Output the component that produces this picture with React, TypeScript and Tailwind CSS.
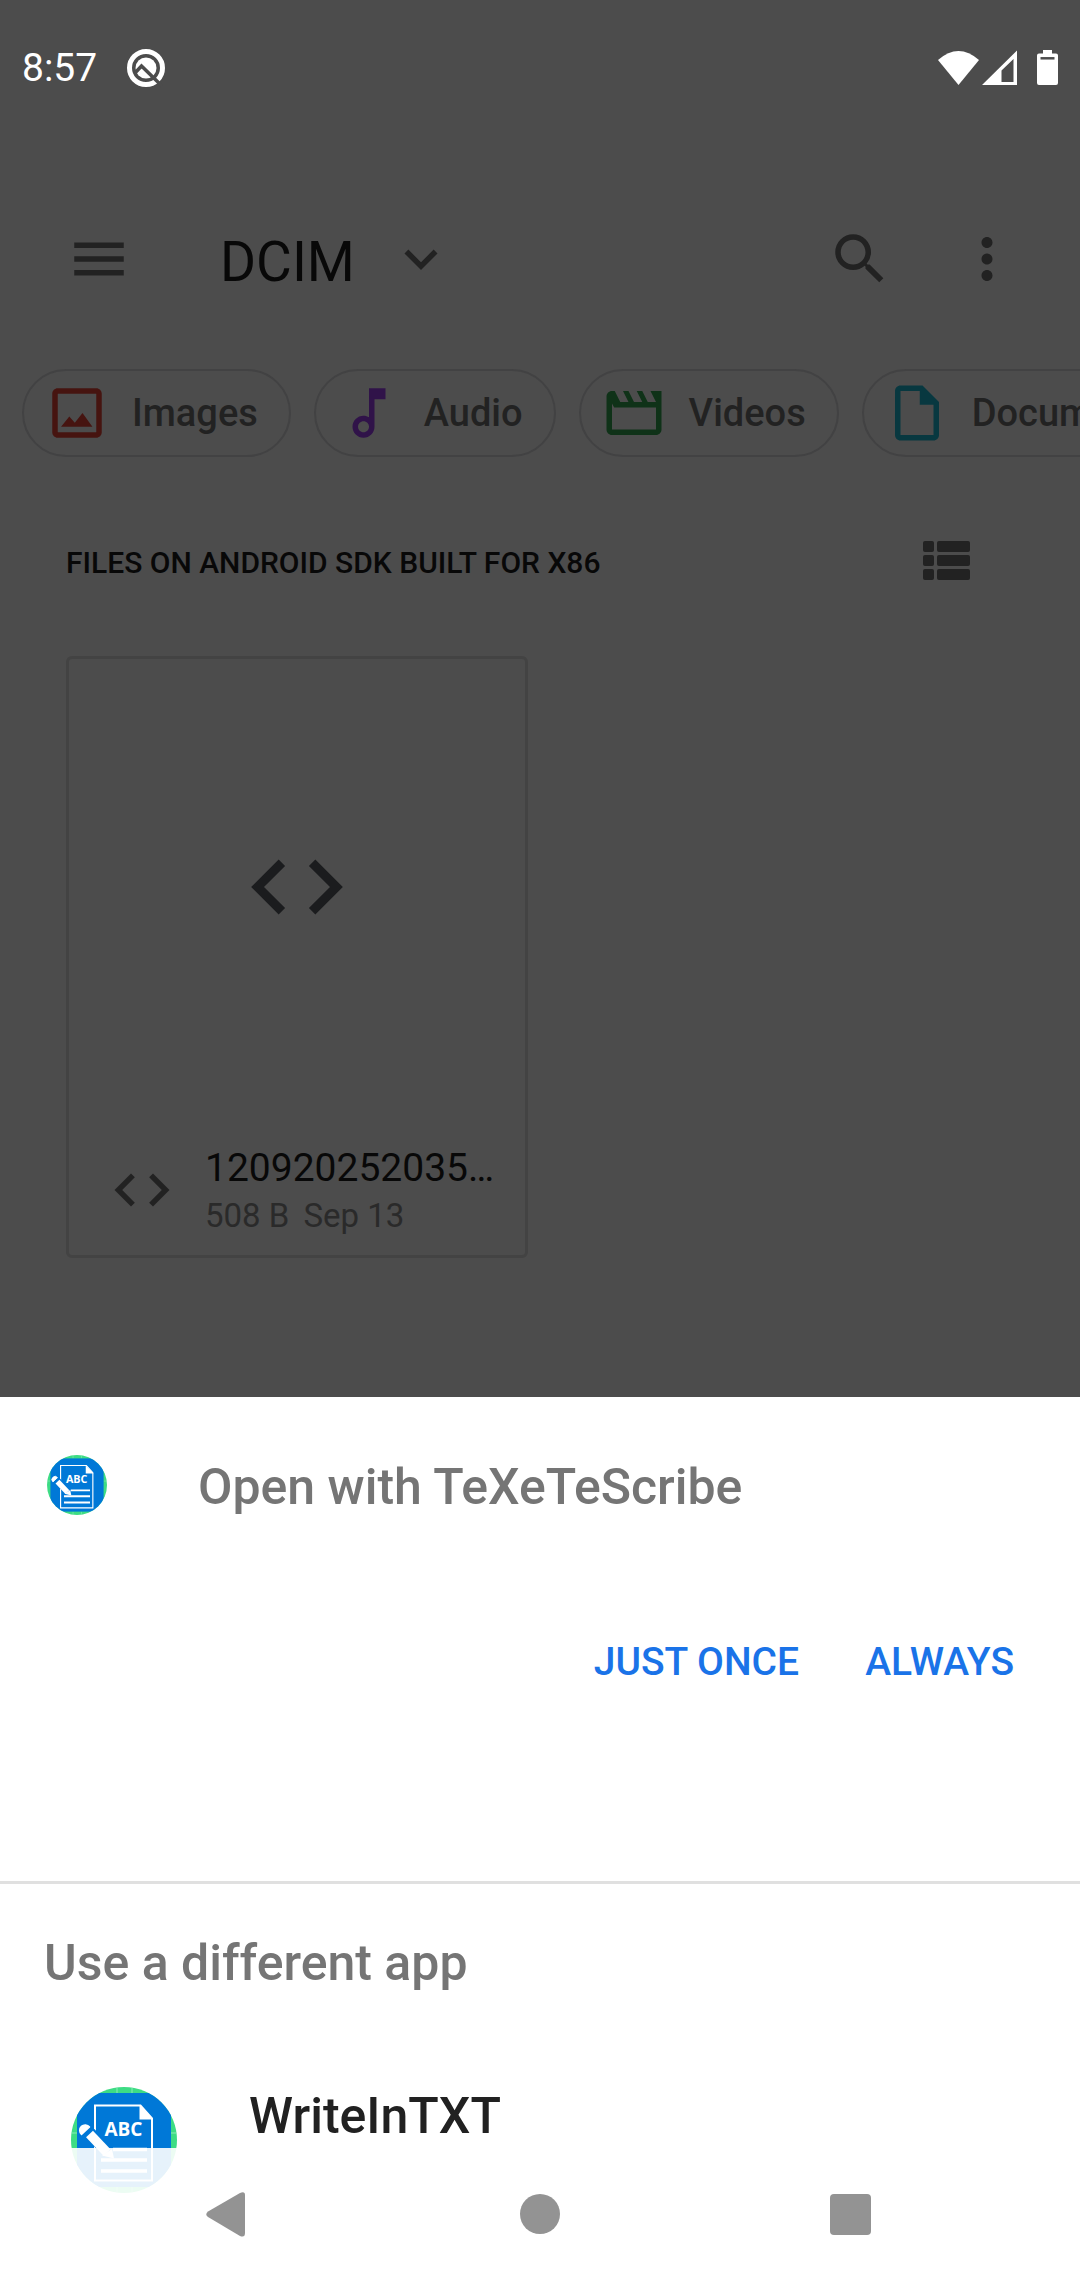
import type { ReactNode } from "react";

function MaterialIcon({ d, className }: { d: string; className: string }) {
  return (
    <svg viewBox="0 0 24 24" fill="currentColor" className={className} aria-hidden="true">
      <path d={d} />
    </svg>
  );
}

const paths = {
  menu: "M3 18h18v-2H3v2zm0-5h18v-2H3v2zm0-7v2h18V6H3z",
  expand: "M16.59 8.59 12 13.17 7.41 8.59 6 10l6 6 6-6z",
  search:
    "M15.5 14h-.79l-.28-.27A6.471 6.471 0 0 0 16 9.5 6.5 6.5 0 1 0 9.5 16c1.61 0 3.09-.59 4.23-1.57l.27.28v.79l5 4.99L20.49 19l-4.99-5zm-6 0C7.01 14 5 11.99 5 9.5S7.01 5 9.5 5 14 7.01 14 9.5 11.99 14 9.5 14z",
  more: "M12 8c1.1 0 2-.9 2-2s-.9-2-2-2-2 .9-2 2 .9 2 2 2zm0 2c-1.1 0-2 .9-2 2s.9 2 2 2 2-.9 2-2-.9-2-2-2zm0 6c-1.1 0-2 .9-2 2s.9 2 2 2 2-.9 2-2-.9-2-2-2z",
  code: "M9.4 16.6 4.8 12l4.6-4.6L8 6l-6 6 6 6 1.4-1.4zm5.2 0 4.6-4.6-4.6-4.6L16 6l6 6-6 6-1.4-1.4z",
  image:
    "M19 3H5c-1.1 0-2 .9-2 2v14c0 1.1.9 2 2 2h14c1.1 0 2-.9 2-2V5c0-1.1-.9-2-2-2zm0 16H5V5h14v14zM6.2 17h11.4l-3.6-5-2.8 3.5-2-2.2z",
  audio:
    "M12 3l.01 10.55c-.59-.34-1.27-.55-2-.55C7.79 13 6 14.79 6 17s1.79 4 4.01 4S14 19.21 14 17V7h4V3h-6zm-1.99 16c-1.1 0-2-.9-2-2s.9-2 2-2 2 .9 2 2-.9 2-2 2z",
  video:
    "M18 4l2 4h-3l-2-4h-2l2 4h-3l-2-4H8l2 4H7L5 4H4c-1.1 0-1.99.9-1.99 2L2 18c0 1.1.9 2 2 2h16c1.1 0 2-.9 2-2V4h-4zm2 14H4V8.5L4.8 10H20v8z",
  document:
    "M14 2H6c-1.1 0-1.99.9-1.99 2L4 20c0 1.1.89 2 1.99 2H18c1.1 0 2-.9 2-2V8l-6-6zM6 20V4h7v5h5v11H6z",
};

function StatusBar() {
  return (
    <div className="flex h-[132px] items-center justify-between pt-1 pr-[20px] pl-[22px] text-white">
      <div className="flex items-center gap-[29px]">
        <span className="text-[39px] leading-[46px]">8:57</span>
        <svg viewBox="0 0 40 40" className="h-[40px] w-[40px]" aria-hidden="true">
          <circle cx="20" cy="20" r="16.5" fill="none" stroke="#fff" strokeWidth="5" />
          <circle cx="20" cy="20" r="10.5" fill="#fff" />
          <path d="M8.500 25.500 L15.500 18 L36 38" fill="none" stroke="#4c4c4c" strokeWidth="3.500" />
        </svg>
      </div>
      <svg viewBox="0 0 122 36" className="h-[36px] w-[122px]" role="img" aria-label="Wi-Fi, signal and battery">
        <path d="M0 10 Q20.500 -8 41 10 L20.500 35 Z" fill="#fff" />
        <path d="M44 35 L79 0.500 V35 Z M63.500 20.500 V32 H75.500 V9 Z" fill="#fff" fillRule="evenodd" />
        <path
          d="M105 0 h9 v3.500 h4 a2 2 0 0 1 2 2 v27.500 a2 2 0 0 1 -2 2 h-17 a2 2 0 0 1 -2 -2 v-27.500 a2 2 0 0 1 2 -2 h4 Z"
          fill="#fff"
        />
        <path d="M102.500 8.300 h14" stroke="#4c4c4c" strokeWidth="2.500" />
      </svg>
    </div>
  );
}

function Chip({ label, icon, color }: { label: string; icon: string; color: string }) {
  return (
    <button
      type="button"
      className="flex h-[88px] shrink-0 items-center gap-[22px] rounded-full border-2 border-[#424243] pr-[31px] pl-[20px] text-[38px] leading-[46px] font-medium text-[#222222]"
    >
      <span className={color}>
        <MaterialIcon d={icon} className="h-[66px] w-[66px]" />
      </span>
      {label}
    </button>
  );
}

function IconButton({ label, children }: { label: string; children: ReactNode }) {
  return (
    <button type="button" aria-label={label} className="shrink-0 text-[#222222]">
      {children}
    </button>
  );
}

function AppLogo({ className }: { className: string }) {
  return (
    <svg viewBox="0 0 106 106" className={className} aria-hidden="true">
      <clipPath id="disc">
        <circle cx="53" cy="53" r="53" />
      </clipPath>
      <g clipPath="url(#disc)">
        <rect width="106" height="106" fill="#3ddc84" />
        <path d="M46 0V6M61 0V6M0 46H6M100 46H106M46 100V106M61 100V106" stroke="#8aeab6" />
        <rect x="6" y="6" width="94" height="94" fill="#0078d7" />
      </g>
      <path d="M24 18.500H69.500L81 31.500V93.500H24Z" fill="none" stroke="#fff" strokeWidth="2" />
      <path d="M68.500 18V32.500H82Z" fill="#fff" />
      <text
        x="52.500"
        y="49"
        textAnchor="middle"
        fontSize="19"
        fontWeight="700"
        fill="#fff"
        fontFamily="Open Sans, Noto Sans, sans-serif"
      >
        ABC
      </text>
      <path d="M42 62.500H76M30 73H76M30 84H76" stroke="#fff" strokeWidth="3.500" />
      <path d="M19 46 L36 64.500" stroke="#0078d7" strokeWidth="12" />
      <path d="M18.500 47 L36 65.500" stroke="#fff" strokeWidth="9.500" />
      <path d="M31 68.500 L41 62 L43 71.500 Z" fill="#fff" />
      <path
        d="M10.500 47.500 A5.500 5.500 0 1 1 18.500 40 Z"
        fill="#fff"
        stroke="#fff"
        strokeWidth="1.500"
        strokeLinejoin="round"
      />
    </svg>
  );
}

function FilesScreen() {
  return (
    <div className="bg-[#4c4c4c] pb-[139px]">
      <StatusBar />
      <header className="flex h-[160px] items-center pt-[94px] pr-[60px] pl-[66px]">
        <IconButton label="Menu">
          <MaterialIcon d={paths.menu} className="h-[66px] w-[66px]" />
        </IconButton>
        <button type="button" className="ml-[88px] flex items-center gap-[33px] text-[#080808]">
          <span className="pt-[5px] text-[55px] leading-[60px]">DCIM</span>
          <span className="text-[#222222]">
            <MaterialIcon d={paths.expand} className="h-[66px] w-[66px]" />
          </span>
        </button>
        <div className="ml-auto flex gap-[61px]">
          <IconButton label="Search">
            <MaterialIcon d={paths.search} className="h-[66px] w-[66px]" />
          </IconButton>
          <IconButton label="More options">
            <MaterialIcon d={paths.more} className="h-[66px] w-[66px]" />
          </IconButton>
        </div>
      </header>
      <div className="mt-[77px] flex gap-[23px] overflow-hidden pl-[22px]">
        <Chip label="Images" icon={paths.image} color="text-[#461410]" />
        <Chip label="Audio" icon={paths.audio} color="text-[#301349]" />
        <Chip label="Videos" icon={paths.video} color="text-[#0f3218]" />
        <Chip label="Documents" icon={paths.document} color="text-[#083840]" />
      </div>
      <main className="px-[66px]">
        <div className="flex items-center justify-between pt-[67px] pr-[44px]">
          <h1 className="pt-[6px] text-[30px] leading-[66px] font-medium text-[#080808]">
            FILES ON ANDROID SDK BUILT FOR X86
          </h1>
          <IconButton label="List view">
            <svg viewBox="0 0 47 39" className="h-[39px] w-[47px]" fill="currentColor" aria-hidden="true">
              {[0, 14, 28].map((y) => (
                <g key={y}>
                  <rect x="0" y={y} width="11" height="11" rx="2" />
                  <rect x="14" y={y} width="33" height="11" rx="2" />
                </g>
              ))}
            </svg>
          </IconButton>
        </div>
        <article className="mt-[60px] flex w-[462px] max-w-full flex-col rounded-[6px] border-[3px] border-[#434343]">
          <div className="flex h-[455px] items-center justify-center text-[#1b1c1e]">
            <MaterialIcon d={paths.code} className="h-[110px] w-[110px]" />
          </div>
          <div className="flex items-center gap-[30px] pt-[28px] pr-[28px] pb-[17px] pl-[40px]">
            <span className="shrink-0 text-[#222222]">
              <MaterialIcon d={paths.code} className="h-[66px] w-[66px]" />
            </span>
            <div className="min-w-0">
              <h2 className="truncate text-[39px] leading-[52px] text-[#080808]">120920252035.xml</h2>
              <p className="flex gap-[14px] text-[33px] leading-[44px] text-[#2a2a2a]">
                <span>508 B</span>
                <span>Sep 13</span>
              </p>
            </div>
          </div>
        </article>
      </main>
    </div>
  );
}

function NavigationBar() {
  return (
    <nav className="absolute inset-x-0 bottom-0 flex h-[132px] items-center justify-center gap-[244px] bg-white/90 text-[#939393]">
      <button type="button" aria-label="Back">
        <svg viewBox="0 0 66 66" className="h-[66px] w-[66px]" fill="currentColor" aria-hidden="true">
          <path d="M11 30.500 L43 12 Q48 10 48 14 V52 Q48 57 43 55 L11 36 Q7.500 33.500 11 30.500 Z" />
        </svg>
      </button>
      <button type="button" aria-label="Home">
        <svg viewBox="0 0 66 66" className="h-[66px] w-[66px]" fill="currentColor" aria-hidden="true">
          <circle cx="33" cy="33" r="20" />
        </svg>
      </button>
      <button type="button" aria-label="Recent apps">
        <svg viewBox="0 0 66 66" className="h-[66px] w-[66px]" fill="currentColor" aria-hidden="true">
          <rect x="13" y="13" width="41" height="41" rx="4" />
        </svg>
      </button>
    </nav>
  );
}

function OpenWithSheet() {
  return (
    <section className="relative flex-1 bg-white pb-[86px]">
      <div className="flex items-center gap-[91px] px-[47px] pt-[53px]">
        <AppLogo className="h-[60px] w-[60px] shrink-0" />
        <h2 className="pt-1 text-[50px] leading-[66px] font-medium text-[#757575]">Open with TeXeTeScribe</h2>
      </div>
      <div className="mt-[76px] flex justify-end gap-[66px] pr-[66px] text-[39px] leading-[132px] font-medium text-[#1a73e8]">
        <button type="button">JUST ONCE</button>
        <button type="button">ALWAYS</button>
      </div>
      <div className="mt-[153px] border-t-[3px] border-[#e0e0e0] px-[44px] pt-[46px]">
        <h3 className="text-[50px] leading-[66px] font-medium text-[#757575]">Use a different app</h3>
      </div>
      <button type="button" className="mt-[91px] flex w-full items-start gap-[72px] pl-[71px] text-left">
        <AppLogo className="h-[106px] w-[106px] shrink-0" />
        <span className="text-[50px] leading-[58px] font-medium text-[#212121]">WriteInTXT</span>
      </button>
      <NavigationBar />
    </section>
  );
}

export default function App() {
  return (
    <div className="flex min-h-screen flex-col bg-[#4c4c4c] font-[Roboto,sans-serif]">
      <FilesScreen />
      <OpenWithSheet />
    </div>
  );
}
